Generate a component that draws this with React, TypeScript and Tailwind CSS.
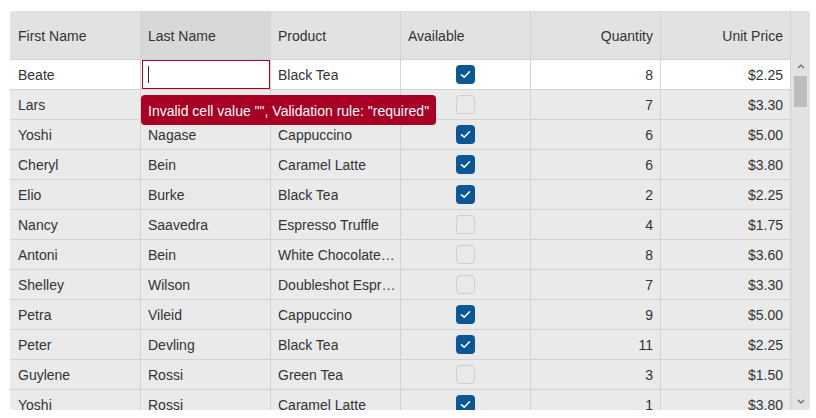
import React from 'react';

type Row = { first: string; last: string; product: string; available: boolean; qty: number; price: string };

const rows: Row[] = [
  { first: 'Beate', last: '', product: 'Black Tea', available: true, qty: 8, price: '$2.25' },
  { first: 'Lars', last: '', product: '', available: false, qty: 7, price: '$3.30' },
  { first: 'Yoshi', last: 'Nagase', product: 'Cappuccino', available: true, qty: 6, price: '$5.00' },
  { first: 'Cheryl', last: 'Bein', product: 'Caramel Latte', available: true, qty: 6, price: '$3.80' },
  { first: 'Elio', last: 'Burke', product: 'Black Tea', available: true, qty: 2, price: '$2.25' },
  { first: 'Nancy', last: 'Saavedra', product: 'Espresso Truffle', available: false, qty: 4, price: '$1.75' },
  { first: 'Antoni', last: 'Bein', product: 'White Chocolate Mocha', available: false, qty: 8, price: '$3.60' },
  { first: 'Shelley', last: 'Wilson', product: 'Doubleshot Espresso', available: false, qty: 7, price: '$3.30' },
  { first: 'Petra', last: 'Vileid', product: 'Cappuccino', available: true, qty: 9, price: '$5.00' },
  { first: 'Peter', last: 'Devling', product: 'Black Tea', available: true, qty: 11, price: '$2.25' },
  { first: 'Guylene', last: 'Rossi', product: 'Green Tea', available: false, qty: 3, price: '$1.50' },
  { first: 'Yoshi', last: 'Rossi', product: 'Caramel Latte', available: true, qty: 1, price: '$3.80' },
];

const Check: React.FC<{ on: boolean }> = ({ on }) =>
  on ? (
    <div className="w-[19px] h-[19px] rounded-[4px] bg-[#0b5796] flex items-center justify-center">
      <svg width="11" height="9" viewBox="0 0 11 9" fill="none">
        <path d="M1.5 4.8 L4.2 7.2 L9.5 1.8" stroke="white" strokeWidth="1.6" strokeLinecap="round" strokeLinejoin="round" />
      </svg>
    </div>
  ) : (
    <div className="w-[19px] h-[19px] rounded-[4px] border border-[#cfcfcf] bg-[#e9e9e9]" />
  );

const base = 'h-full border-r border-[#d3d3d3] flex items-center';
const cell = `${base} px-[7px] pt-[2px] truncate`;

export default function App() {
  return (
    <div className="bg-white w-[816px] h-[418px] pt-[11px] px-[10px] text-[14px] text-[#333] font-['Liberation_Sans',Arial,sans-serif]">
      <div className="relative w-[800px] h-[399px] rounded-[4px] overflow-hidden bg-[#e2e2e2] flex">
        <div className="w-[781px] flex flex-col">
          {/* header */}
          <div className="h-[49px] shrink-0 flex border-b border-[#d3d3d3] bg-[#e2e2e2]">
            <div className={`${cell} w-[131px] pl-[8px]`}>First Name</div>
            <div className={`${cell} w-[130px] bg-[#d8d8d8]`}>Last Name</div>
            <div className={`${cell} w-[130px]`}>Product</div>
            <div className={`${cell} w-[130px]`}>Available</div>
            <div className={`${cell} w-[130px] justify-end`}>Quantity</div>
            <div className={`${cell} w-[130px] justify-end`}>Unit Price</div>
          </div>
          {/* body */}
          <div className="flex-1 overflow-hidden">
            {rows.map((r, i) => (
              <div
                key={i}
                className={`h-[30px] flex border-b border-[#d3d3d3] ${i === 0 ? 'bg-white' : 'bg-[#eaeaea]'}`}
              >
                <div className={`${cell} w-[131px] pl-[8px]`}>{r.first}</div>
                {i === 0 ? (
                  <div className={`${base} w-[130px] pl-[1px]`}>
                    <div className="w-full h-[29px] border border-[#a8002a] bg-white flex items-center pl-[5px]">
                      <span className="w-px h-[17px] bg-[#333]" />
                    </div>
                  </div>
                ) : (
                  <div className={`${cell} w-[130px]`}>{r.last}</div>
                )}
                <div className={`${base} w-[130px] pl-[7px] pr-[2px] pt-[2px]`}>
                  <span className="truncate">{r.product}</span>
                </div>
                <div className={`${base} w-[130px] justify-center`}>
                  <Check on={r.available} />
                </div>
                <div className={`${cell} w-[130px] justify-end`}>{r.qty}</div>
                <div className={`${cell} w-[130px] justify-end`}>{r.price}</div>
              </div>
            ))}
          </div>
        </div>
        {/* scrollbar */}
        <div className="w-[19px] flex flex-col bg-[#e2e2e2]">
          <div className="h-[49px]" />
          <div className="flex-1 flex flex-col items-center">
            <svg width="8" height="5" viewBox="0 0 8 5" className="mt-[4px]">
              <path d="M1 4 L4 1 L7 4" stroke="#666" strokeWidth="1.2" fill="none" />
            </svg>
            <div className="mt-[7px] w-[13px] h-[31px] bg-[#bdbdbd]" />
            <div className="flex-1" />
            <svg width="8" height="5" viewBox="0 0 8 5" className="mb-[6px]">
              <path d="M1 1 L4 4 L7 1" stroke="#666" strokeWidth="1.2" fill="none" />
            </svg>
          </div>
        </div>
        {/* validation tooltip */}
        <div className="absolute left-[131px] top-[84px] h-[30px] px-[7px] pt-[2px] flex items-center rounded-[4px] bg-[#a70024] text-white whitespace-nowrap">
          Invalid cell value "", Validation rule: "required"
        </div>
      </div>
    </div>
  );
}
